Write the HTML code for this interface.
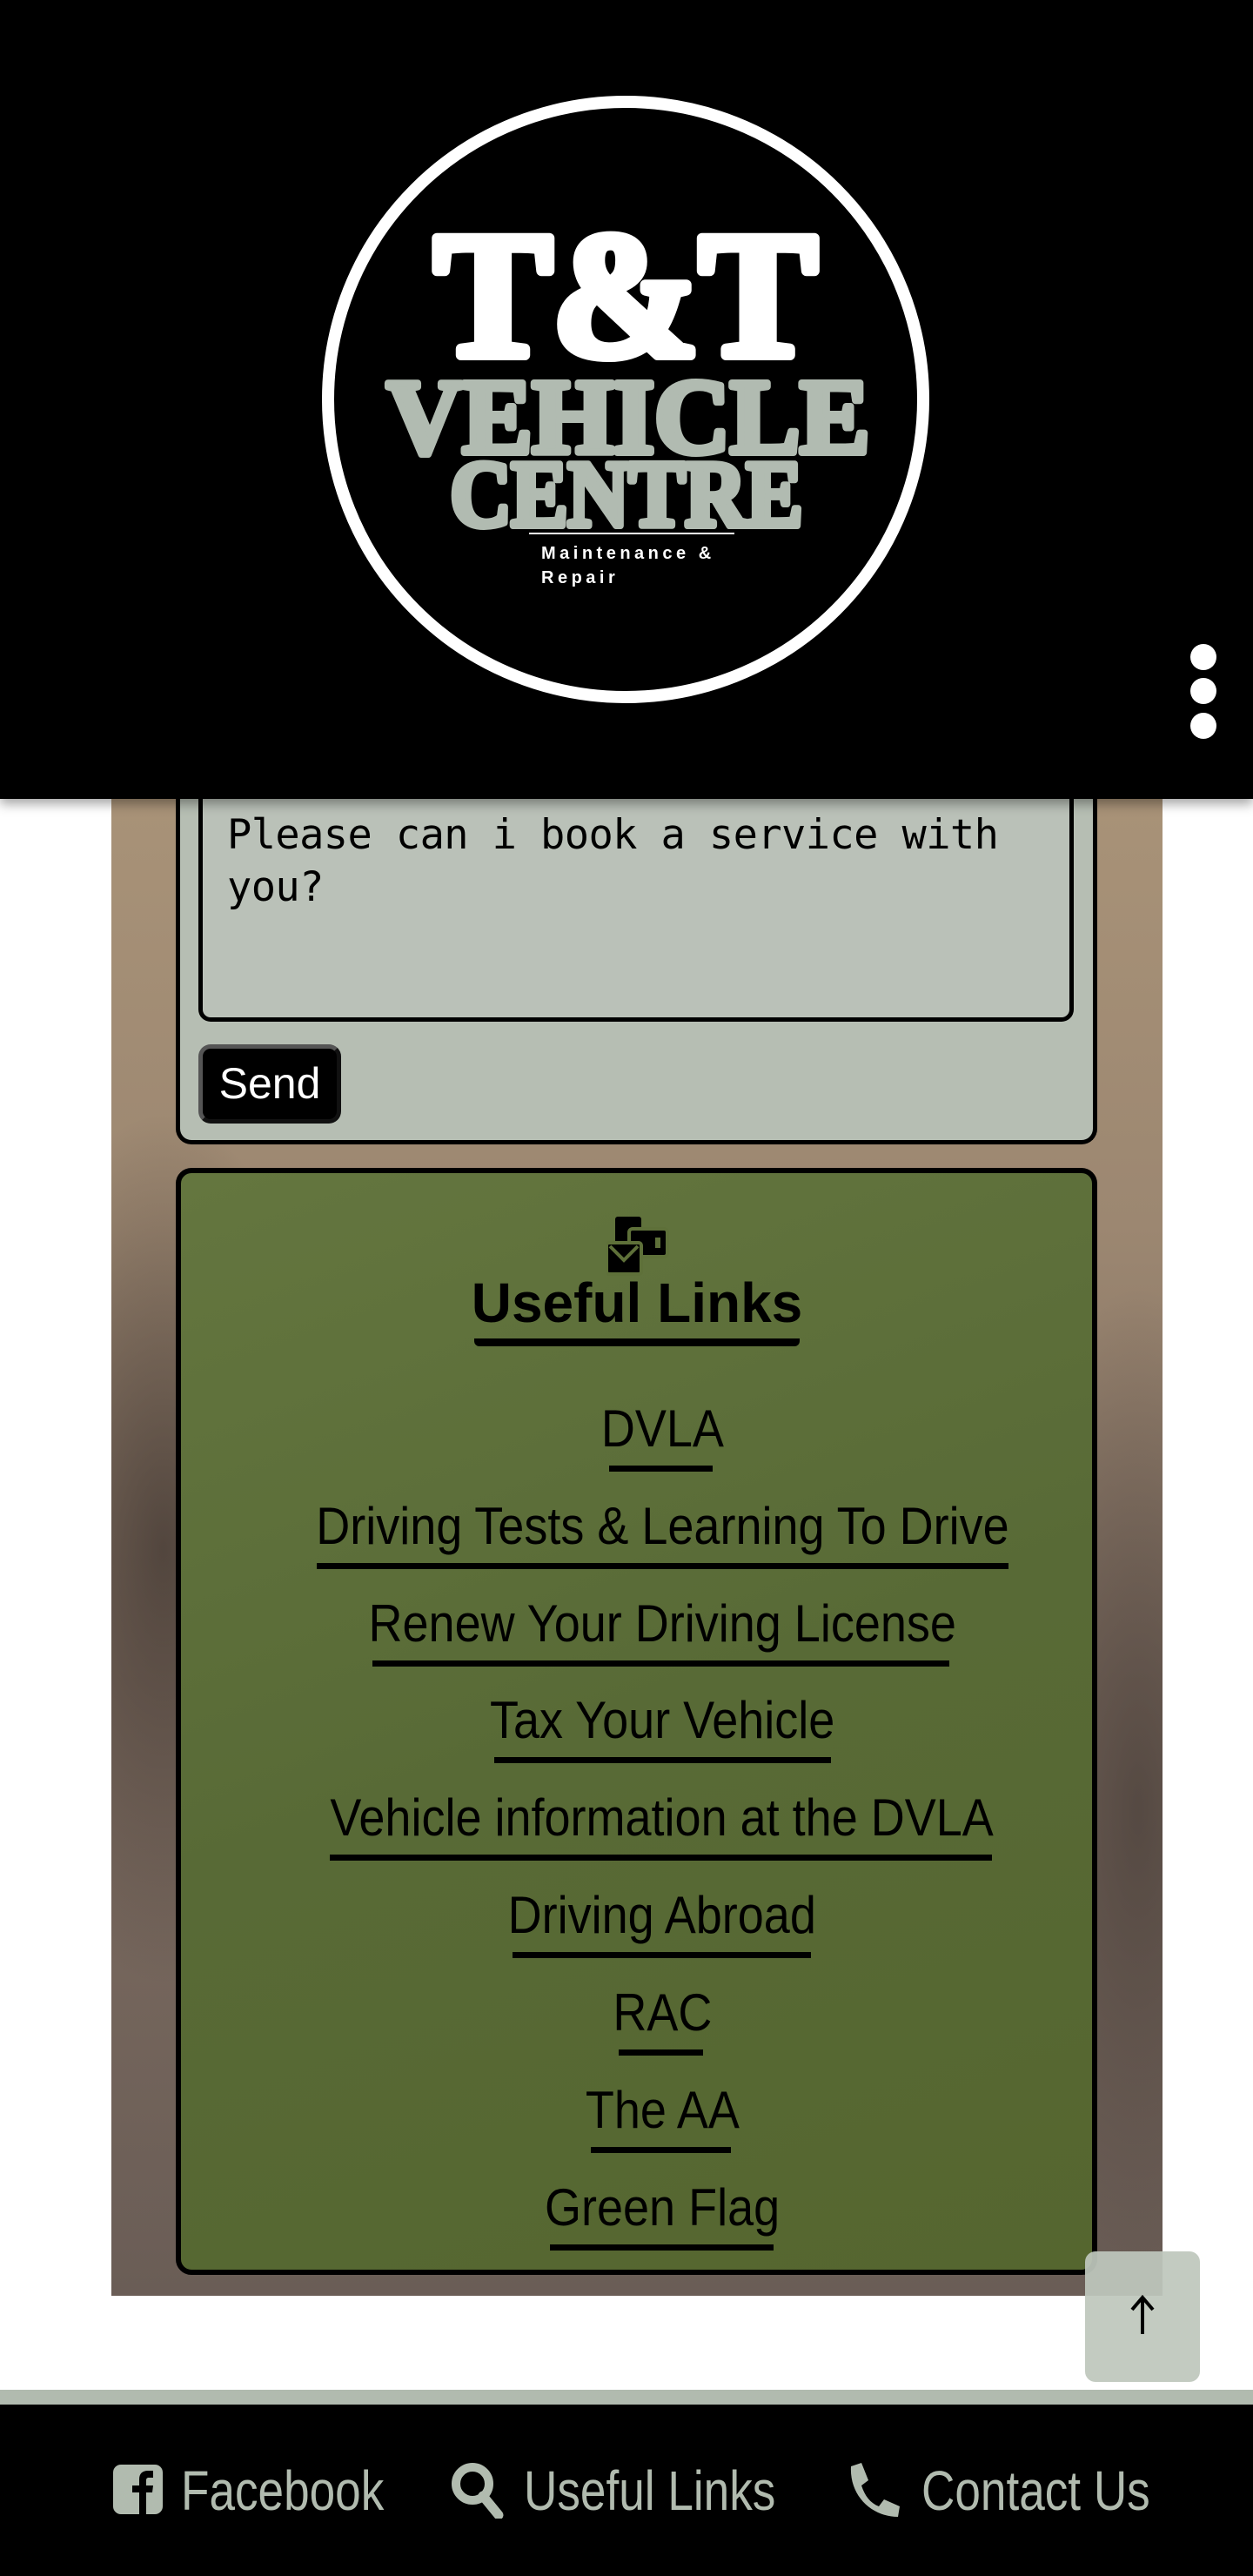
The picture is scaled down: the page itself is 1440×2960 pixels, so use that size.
<!DOCTYPE html>
<html><head><meta charset="utf-8"><style>
*{margin:0;padding:0;box-sizing:border-box}
body{width:1440px;height:2960px;position:relative;background:#fff;overflow:hidden;font-family:"Liberation Sans",sans-serif}
.abs{position:absolute}
.bg{left:128px;top:880px;width:1208px;height:1758px;background:
radial-gradient(ellipse 200px 500px at 60px 900px,rgba(60,50,45,.7),transparent),
radial-gradient(ellipse 180px 600px at 1180px 1200px,rgba(70,60,55,.7),transparent),
linear-gradient(180deg,#a99378 0%,#9c8771 30%,#7d6c60 60%,#6a5d56 100%)}
.form{left:202px;top:880px;width:1059px;height:435px;background:#b6beb3;border:5px solid #000;border-top:none;border-radius:0 0 18px 18px}
.ta{left:228px;top:880px;width:1006px;height:294px;background:#bac1b8;border:5px solid #000;border-top:none;border-radius:0 0 14px 14px;font-family:"DejaVu Sans Mono","Liberation Mono",monospace;font-size:47px;line-height:60px;padding:50px 0 0 28px;color:#000;letter-spacing:-0.6px}
.send{left:228px;top:1200px;width:164px;height:91px;background:#000;border:5px solid #555;border-right-color:#111;border-bottom-color:#111;border-radius:14px;color:#fff;font-size:50px;line-height:80px;text-align:center}
.links{left:202px;top:1342px;width:1059px;height:1272px;background:linear-gradient(160deg,#64763f,#586a36 50%,#55662f);border:6px solid #000;border-radius:18px}
.lt{left:41px;width:1440px;text-align:center;font-size:60px;line-height:70px;color:#000}
.lt span{display:inline-block;transform:scaleX(.9)}
.ul{height:7px;background:#000}
.hdr{left:0;top:0;width:1440px;height:918px;background:#000;box-shadow:0 6px 12px rgba(0,0,0,.35)}
.foot{left:0;top:2746px;width:1440px;height:214px;background:#000;border-top:17px solid #b1bbaf}
.ft{top:2822px;font-size:64px;line-height:80px;color:#b1bbaf;transform-origin:left center;transform:scaleX(.83);white-space:nowrap}
</style></head><body>
<div class="abs bg"></div>
<div class="abs form"></div>
<div class="abs ta">Please can i book a service with<br>you?</div>
<div class="abs send">Send</div>
<div class="abs links"></div>
<svg class="abs" style="left:697px;top:1398px" width="72" height="68" viewBox="0 0 72 68"><rect x="10" y="0" width="30" height="50" rx="3" fill="#000"/><rect x="26" y="14" width="44" height="32" rx="4" fill="#000" stroke="#5e7039" stroke-width="4"/><rect x="56" y="24" width="6" height="12" fill="#5e7039"/><rect x="0" y="30" width="40" height="36" rx="3" fill="#000" stroke="#5e7039" stroke-width="4"/><path d="M4 34 L20 50 L36 34" fill="none" stroke="#5e7039" stroke-width="4"/></svg>
<div class="abs lt" style="top:1462px;font-size:64px;font-weight:bold;left:12px"><span style="transform:scaleX(1.0)">Useful Links</span></div>
<div class="abs ul" style="left:545px;top:1538px;width:374px;height:9px;border-radius:0 0 6px 6px"></div>

<div class="abs lt" style="top:1607px"><span>DVLA</span></div><div class="abs ul" style="left:700px;top:1684px;width:119px"></div>
<div class="abs lt" style="top:1719px"><span>Driving Tests &amp; Learning To Drive</span></div><div class="abs ul" style="left:364px;top:1796px;width:795px"></div>
<div class="abs lt" style="top:1831px"><span>Renew Your Driving License</span></div><div class="abs ul" style="left:428px;top:1908px;width:663px"></div>
<div class="abs lt" style="top:1942px"><span>Tax Your Vehicle</span></div><div class="abs ul" style="left:568px;top:2019px;width:387px"></div>
<div class="abs lt" style="top:2054px"><span>Vehicle information at the DVLA</span></div><div class="abs ul" style="left:379px;top:2131px;width:761px"></div>
<div class="abs lt" style="top:2166px"><span>Driving Abroad</span></div><div class="abs ul" style="left:589px;top:2243px;width:343px"></div>
<div class="abs lt" style="top:2278px"><span>RAC</span></div><div class="abs ul" style="left:711px;top:2355px;width:97px"></div>
<div class="abs lt" style="top:2390px"><span>The AA</span></div><div class="abs ul" style="left:679px;top:2467px;width:161px"></div>
<div class="abs lt" style="top:2502px"><span>Green Flag</span></div><div class="abs ul" style="left:632px;top:2579px;width:257px"></div>

<div class="abs" style="left:1247px;top:2587px;width:132px;height:150px;background:rgba(190,199,188,.93);border-radius:12px"></div>
<svg class="abs" style="left:1297px;top:2636px" width="32" height="48" viewBox="0 0 32 48"><path d="M16 46 V4 M4 18 L16 4 L28 18" fill="none" stroke="#000" stroke-width="4"/></svg>

<div class="abs hdr"></div>
<svg class="abs" style="left:360px;top:100px" width="720" height="720" viewBox="0 0 720 720">
<circle cx="359" cy="359" r="342" fill="#000" stroke="#fff" stroke-width="14"/>
<text x="359" y="308" text-anchor="middle" font-family="Liberation Serif,serif" font-weight="bold" font-size="205" fill="#fff" stroke="#fff" stroke-width="12" stroke-linejoin="round" textLength="440" lengthAdjust="spacingAndGlyphs">T&amp;T</text>
<text x="362" y="420" text-anchor="middle" font-family="Liberation Serif,serif" font-weight="bold" font-size="122" fill="#b1bbb1" stroke="#b1bbb1" stroke-width="8" stroke-linejoin="round" textLength="555" lengthAdjust="spacingAndGlyphs">VEHICLE</text>
<text x="360" y="504" text-anchor="middle" font-family="Liberation Serif,serif" font-weight="bold" font-size="108" fill="#b1bbb1" stroke="#b1bbb1" stroke-width="8" stroke-linejoin="round" textLength="405" lengthAdjust="spacingAndGlyphs">CENTRE</text>
<rect x="248" y="512" width="236" height="2" fill="#fff"/>
<text x="262" y="542" font-family="Liberation Sans,sans-serif" font-weight="bold" font-size="20" fill="#fff" letter-spacing="4.5">Maintenance &amp;</text>
<text x="262" y="570" font-family="Liberation Sans,sans-serif" font-weight="bold" font-size="20" fill="#fff" letter-spacing="4.5">Repair</text>
</svg>
<div class="abs" style="left:1368px;top:740px;width:30px;height:30px;border-radius:50%;background:#fff"></div>
<div class="abs" style="left:1368px;top:779px;width:30px;height:30px;border-radius:50%;background:#fff"></div>
<div class="abs" style="left:1368px;top:819px;width:30px;height:30px;border-radius:50%;background:#fff"></div>

<div class="abs foot"></div>
<svg class="abs" style="left:130px;top:2832px" width="57" height="57" viewBox="0 0 57 57"><rect width="57" height="57" rx="9" fill="#b1bbaf"/><path d="M30 57 V32 H22 V24 H30 V17 C30 10 34 7 40 7 H46 V15 H41 C39 15 38 16 38 18 V24 H46 L45 32 H38 V57Z" fill="#000"/></svg>
<div class="abs ft" style="left:208px">Facebook</div>
<svg class="abs" style="left:517px;top:2828px" width="64" height="66" viewBox="0 0 64 66"><circle cx="26" cy="26" r="19" fill="none" stroke="#b1bbaf" stroke-width="10"/><path d="M38 40 L56 62" stroke="#b1bbaf" stroke-width="11" stroke-linecap="round"/></svg>
<div class="abs ft" style="left:602px">Useful Links</div>
<svg class="abs" style="left:972px;top:2828px" width="64" height="66" viewBox="0 0 64 66"><path d="M6 6 L18 2 L26 22 L18 28 C22 40 28 48 38 52 L44 44 L62 52 L60 64 C30 64 4 40 6 6Z" fill="#b1bbaf"/></svg>
<div class="abs ft" style="left:1059px">Contact Us</div>
</body></html>
